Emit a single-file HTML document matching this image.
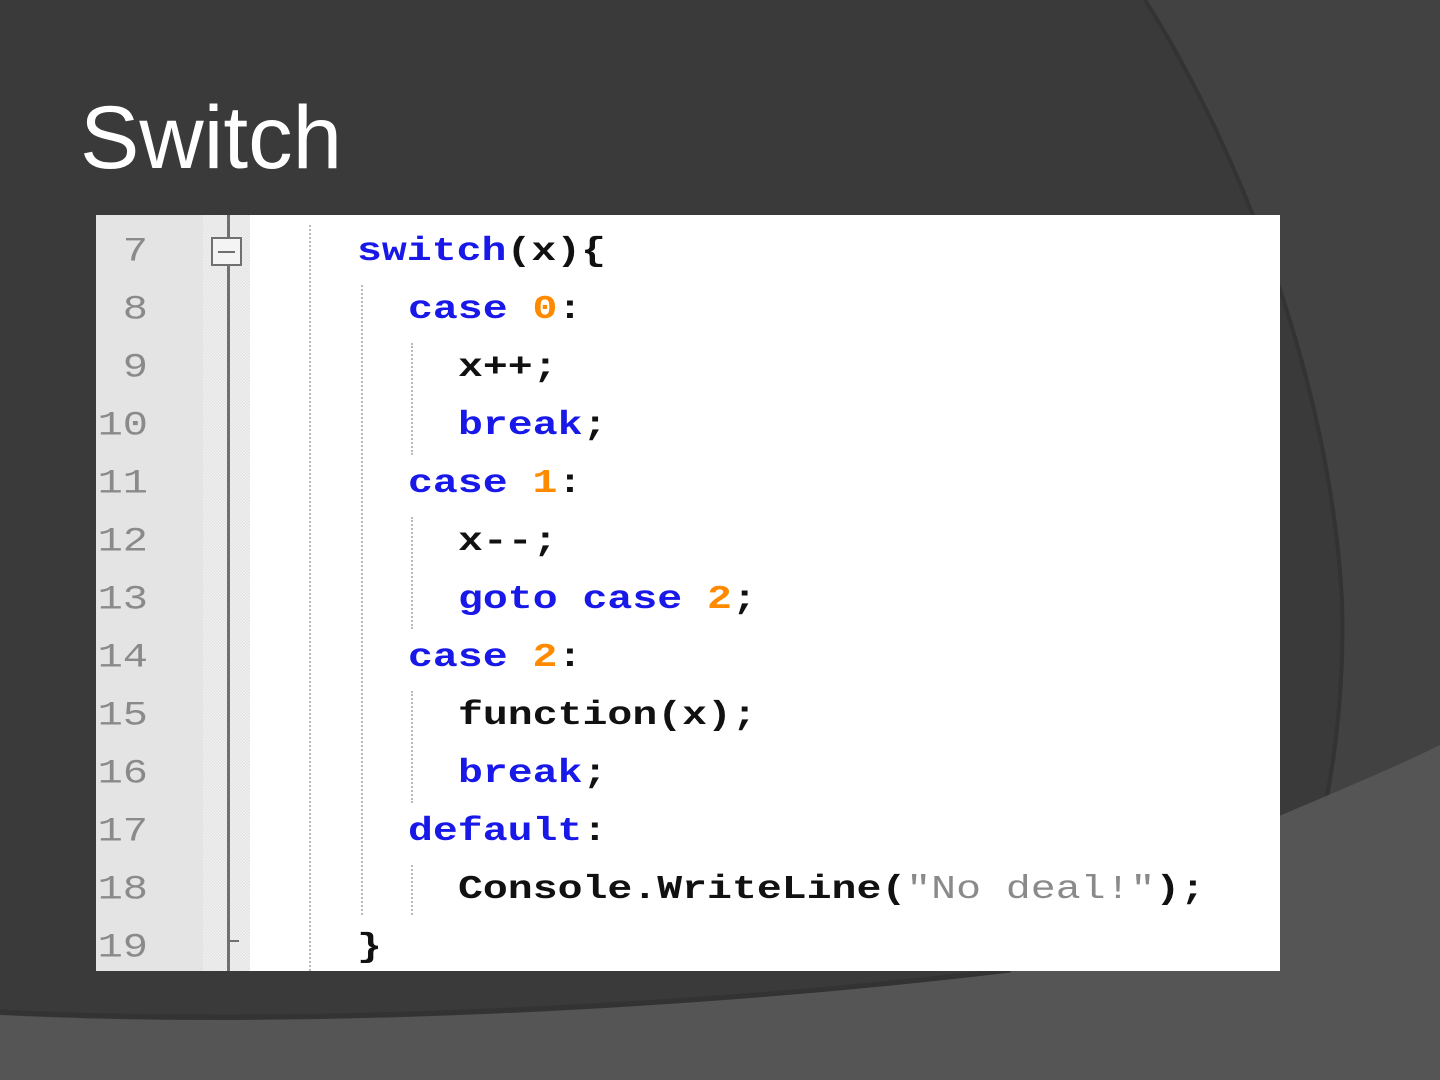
<!DOCTYPE html>
<html><head><meta charset="utf-8"><style>
html,body{margin:0;padding:0;width:1440px;height:1080px;overflow:hidden;background:#3a3a3a}
#bg{position:absolute;left:0;top:0}
h1{position:absolute;left:80px;top:86px;margin:0;font:400 89px "Liberation Sans",sans-serif;color:#fff;letter-spacing:0}
#code{position:absolute;left:96px;top:215px;width:1184px;height:756px;background:#fff;overflow:hidden}
#gut{position:absolute;left:0;top:0;width:107px;height:756px;background:#e4e4e4}
#fold{position:absolute;left:107px;top:0;width:47px;height:756px;background:repeating-conic-gradient(#f2f2f2 0 25%,#e2e2e2 0 50%) 0 0/3px 3px}
#fl{position:absolute;left:131px;top:0;width:3px;height:756px;background:#707070}
#box{position:absolute;left:115px;top:22px;width:31px;height:29px;border:2px solid #707070;background:#f4f4f4;box-sizing:border-box}
#box:after{content:"";position:absolute;left:5px;top:12px;width:17px;height:2px;background:#707070}
.g{position:absolute;width:0;border-left:2px dotted #b8b8b8}
.ln{position:absolute;left:0;width:52px;text-align:right;font:400 42px "Liberation Mono",monospace;color:#8a8a8a;line-height:58px;transform:scaleY(0.82);transform-origin:0 44px}
.c{position:absolute;font:700 41.5px "Liberation Mono",monospace;color:#111;white-space:pre;line-height:58px;transform:scaleY(0.8);transform-origin:0 44px}
.k{color:#1818e8}.n{color:#ff8a00}.s{color:#8a8a8a;font-weight:400}
</style></head><body>
<svg id="bg" width="1440" height="1080">
<path d="M1145 0 C1240 150 1330 380 1342 600 C1348 800 1290 960 1225 1080 L1440 1080 L1440 0Z" fill="#424242"/>
<path d="M1145 0 C1240 150 1330 380 1342 600 C1348 800 1290 960 1225 1080" fill="none" stroke="#333" stroke-width="4"/>
<path d="M0 1015 C300 1030 700 1010 1010 972 L1270 820 C1340 790 1400 765 1440 745 L1440 1080 L0 1080Z" fill="#555"/>
<path d="M0 1012 C300 1027 700 1007 1010 970" fill="none" stroke="#333" stroke-width="5"/>
</svg>
<h1>Switch</h1>
<div id="code">
<div id="gut"></div><div id="fold"></div><div id="fl"></div><div id="box"></div>
<div style="position:absolute;left:133px;top:725px;width:10px;height:2px;background:#707070"></div>
<div class="g" style="left:213px;top:10px;height:746px"></div>
<div class="g" style="left:265px;top:70px;height:630px"></div>
<div class="g" style="left:315px;top:128px;height:112px"></div>
<div class="g" style="left:315px;top:302px;height:112px"></div>
<div class="g" style="left:315px;top:476px;height:112px"></div>
<div class="g" style="left:315px;top:650px;height:50px"></div>
<div class="ln" style="top:5px">7</div>
<div class="ln" style="top:63px">8</div>
<div class="ln" style="top:121px">9</div>
<div class="ln" style="top:179px">10</div>
<div class="ln" style="top:237px">11</div>
<div class="ln" style="top:295px">12</div>
<div class="ln" style="top:353px">13</div>
<div class="ln" style="top:411px">14</div>
<div class="ln" style="top:469px">15</div>
<div class="ln" style="top:527px">16</div>
<div class="ln" style="top:585px">17</div>
<div class="ln" style="top:643px">18</div>
<div class="ln" style="top:701px">19</div>
<div class="c" style="left:261px;top:5px"><span class="k">switch</span>(x){</div>
<div class="c" style="left:312px;top:63px"><span class="k">case</span> <span class="n">0</span>:</div>
<div class="c" style="left:362px;top:121px">x++;</div>
<div class="c" style="left:362px;top:179px"><span class="k">break</span>;</div>
<div class="c" style="left:312px;top:237px"><span class="k">case</span> <span class="n">1</span>:</div>
<div class="c" style="left:362px;top:295px">x--;</div>
<div class="c" style="left:362px;top:353px"><span class="k">goto case</span> <span class="n">2</span>;</div>
<div class="c" style="left:312px;top:411px"><span class="k">case</span> <span class="n">2</span>:</div>
<div class="c" style="left:362px;top:469px">function(x);</div>
<div class="c" style="left:362px;top:527px"><span class="k">break</span>;</div>
<div class="c" style="left:312px;top:585px"><span class="k">default</span>:</div>
<div class="c" style="left:362px;top:643px">Console.WriteLine(<span class="s">"No deal!"</span>);</div>
<div class="c" style="left:261px;top:701px">}</div>
</div>
</body></html>
